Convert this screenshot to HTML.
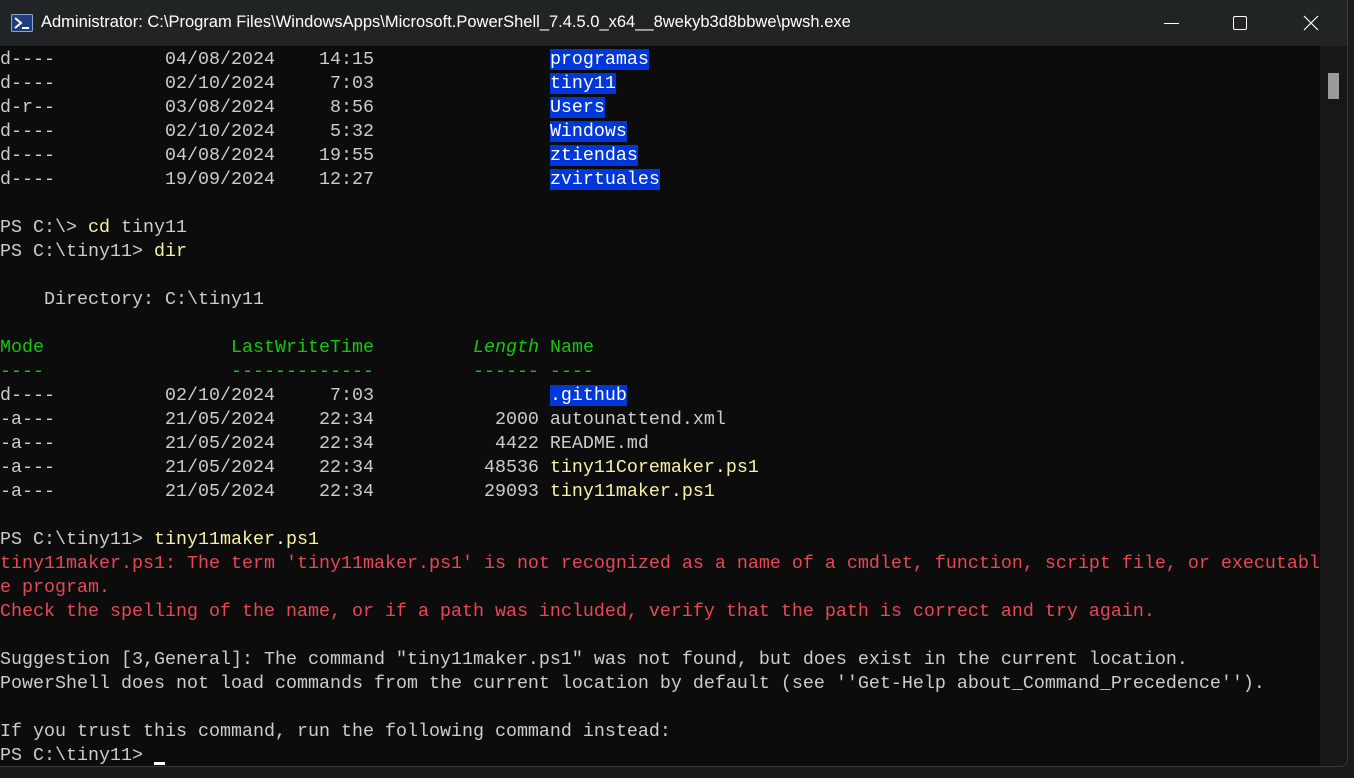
<!DOCTYPE html>
<html><head><style>
html,body{margin:0;padding:0;width:1354px;height:778px;overflow:hidden;background:#1b1b1b;}
.win{position:absolute;left:0;top:0;width:1347px;height:766px;background:#0c0c0c;border-right:1px solid #3a3a3a;border-bottom:1px solid #3a3a3a;border-bottom-right-radius:8px;overflow:hidden;}
.title{position:absolute;left:0;top:0;width:1347px;height:46px;background:#202424;}
.ttext{position:absolute;left:41px;top:13px;font:16.5px "Liberation Sans",sans-serif;color:#fff;white-space:nowrap;}
.sb{position:absolute;left:1320px;top:46px;width:27px;height:720px;background:#171717;}
.thumb{position:absolute;left:8px;top:27px;width:11px;height:26px;background:#9a9a9a;}
pre{position:absolute;left:0;top:48px;margin:0;font:18.333px/24px "Liberation Mono",monospace;color:#cccccc;}
.y{color:#f9f1a5}.r{color:#e74856}.g{color:#16c60c}.b{background:#0037da;color:#fff}.i{font-style:italic}
.cur{display:inline-block;width:11px;height:3px;background:#fff;vertical-align:-5px}
</style></head><body>
<div class="win">
<div class="title">
<svg style="position:absolute;left:11px;top:14px" width="22" height="18" viewBox="0 0 22 18"><rect x="0.5" y="0.5" width="21" height="17" rx="1" fill="#1f3f7a" stroke="#8aa4cf"/><path d="M4 4l6 5-6 5" stroke="#fff" stroke-width="2" fill="none"/><path d="M11 14h7" stroke="#fff" stroke-width="2"/></svg>
<div class="ttext">Administrator: C:\Program Files\WindowsApps\Microsoft.PowerShell_7.4.5.0_x64__8wekyb3d8bbwe\pwsh.exe</div>
<div style="position:absolute;left:1164px;top:23px;width:15px;height:1px;background:#fff"></div>
<div style="position:absolute;left:1233px;top:16px;width:12px;height:12px;border:1px solid #fff;border-radius:2px"></div>
<svg style="position:absolute;left:1303px;top:15px" width="16" height="16"><path d="M1 1L15 15M15 1L1 15" stroke="#fff" stroke-width="1.2"/></svg>
</div>
<div class="sb"><div class="thumb"></div></div>
<pre>d----          04/08/2024    14:15                <span class="b">programas</span>
d----          02/10/2024     7:03                <span class="b">tiny11</span>
d-r--          03/08/2024     8:56                <span class="b">Users</span>
d----          02/10/2024     5:32                <span class="b">Windows</span>
d----          04/08/2024    19:55                <span class="b">ztiendas</span>
d----          19/09/2024    12:27                <span class="b">zvirtuales</span>

PS C:\&gt; <span class="y">cd</span> tiny11
PS C:\tiny11&gt; <span class="y">dir</span>

    Directory: C:\tiny11

<span class="g">Mode                 LastWriteTime         <span class="i">Length</span> Name</span>
<span class="g">----                 -------------         ------ ----</span>
d----          02/10/2024     7:03                <span class="b">.github</span>
-a---          21/05/2024    22:34           2000 autounattend.xml
-a---          21/05/2024    22:34           4422 README.md
-a---          21/05/2024    22:34          48536 <span class="y">tiny11Coremaker.ps1</span>
-a---          21/05/2024    22:34          29093 <span class="y">tiny11maker.ps1</span>

PS C:\tiny11&gt; <span class="y">tiny11maker.ps1</span>
<span class="r">tiny11maker.ps1: The term 'tiny11maker.ps1' is not recognized as a name of a cmdlet, function, script file, or executabl</span>
<span class="r">e program.</span>
<span class="r">Check the spelling of the name, or if a path was included, verify that the path is correct and try again.</span>

Suggestion [3,General]: The command "tiny11maker.ps1" was not found, but does exist in the current location.
PowerShell does not load commands from the current location by default (see ''Get-Help about_Command_Precedence'').

If you trust this command, run the following command instead:
PS C:\tiny11&gt; <span class="cur"></span></pre>
</div>
</body></html>
